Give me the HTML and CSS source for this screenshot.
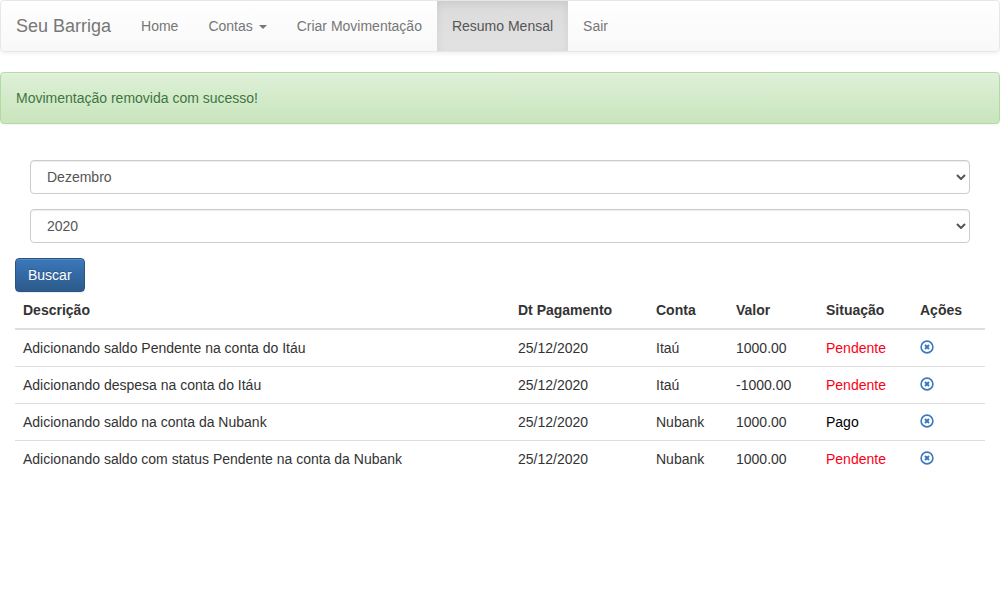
FILE: index.html
```html
<!DOCTYPE html>
<html lang="pt-BR">
<head>
<meta charset="utf-8">
<meta name="viewport" content="width=device-width, initial-scale=1">
<title>Seu Barriga - Resumo Mensal</title>
<link rel="stylesheet" href="styles.css">
</head>
<body>
<svg class="sprite" aria-hidden="true">
  <symbol id="remove" viewBox="0 0 14 14">
    <circle cx="7" cy="7" r="5.9" fill="none" stroke="currentColor" stroke-width="1.6"/>
    <path d="M5 5l4 4M9 5l-4 4" fill="none" stroke="currentColor" stroke-width="2"/>
  </symbol>
</svg>
<nav class="navbar">
  <a class="brand" href="#">Seu Barriga</a>
  <ul class="nav">
    <li><a href="#">Home</a></li>
    <li><a href="#">Contas <span class="caret"></span></a></li>
    <li><a href="#">Criar Movimentação</a></li>
    <li><a class="active" href="#">Resumo Mensal</a></li>
    <li><a href="#">Sair</a></li>
  </ul>
</nav>
<div class="alert" role="alert">Movimentação removida com sucesso!</div>
<main class="content">
  <form class="search">
    <div class="field">
      <select class="control" aria-label="Mês"><option>Dezembro</option></select>
      <svg class="chevron" viewBox="0 0 10 6" aria-hidden="true"><path d="M1 1l4 4 4-4"/></svg>
    </div>
    <div class="field">
      <select class="control" aria-label="Ano"><option>2020</option></select>
      <svg class="chevron" viewBox="0 0 10 6" aria-hidden="true"><path d="M1 1l4 4 4-4"/></svg>
    </div>
    <button class="btn" type="button">Buscar</button>
  </form>
  <table class="table">
    <colgroup><col class="c-desc"><col class="c-date"><col class="c-account"><col class="c-value"><col class="c-status"><col class="c-actions"></colgroup>
    <thead>
      <tr><th>Descrição</th><th>Dt Pagamento</th><th>Conta</th><th>Valor</th><th>Situação</th><th>Ações</th></tr>
    </thead>
    <tbody>
      <tr><td>Adicionando saldo Pendente na conta do Itáu</td><td>25/12/2020</td><td>Itaú</td><td>1000.00</td><td class="pending">Pendente</td><td><a href="#" aria-label="Remover"><svg class="icon"><use href="#remove"/></svg></a></td></tr>
      <tr><td>Adicionando despesa na conta do Itáu</td><td>25/12/2020</td><td>Itaú</td><td>-1000.00</td><td class="pending">Pendente</td><td><a href="#" aria-label="Remover"><svg class="icon"><use href="#remove"/></svg></a></td></tr>
      <tr><td>Adicionando saldo na conta da Nubank</td><td>25/12/2020</td><td>Nubank</td><td>1000.00</td><td class="paid">Pago</td><td><a href="#" aria-label="Remover"><svg class="icon"><use href="#remove"/></svg></a></td></tr>
      <tr><td>Adicionando saldo com status Pendente na conta da Nubank</td><td>25/12/2020</td><td>Nubank</td><td>1000.00</td><td class="pending">Pendente</td><td><a href="#" aria-label="Remover"><svg class="icon"><use href="#remove"/></svg></a></td></tr>
    </tbody>
  </table>
</main>
</body>
</html>
```
FILE: styles.css
```css
* { box-sizing: border-box; }
body {
  margin: 0;
  font: 14px/20px "Helvetica Neue", Helvetica, "Liberation Sans", Arial, sans-serif;
  color: #333;
  background: #fff;
}
a { color: #3b78bd; text-decoration: none; }
.sprite { display: none; }
.navbar {
  display: flex;
  min-height: 52px;
  margin-bottom: 20px;
  border: 1px solid #e7e7e7;
  border-radius: 4px;
  background: linear-gradient(#fff, #f8f8f8);
  box-shadow: inset 0 1px 0 rgba(255,255,255,.15), 0 1px 5px rgba(0,0,0,.075);
}
.brand { padding: 15px; font-size: 18px; color: #777; }
.nav { display: flex; margin: 0; padding: 0; list-style: none; }
.nav a { display: block; padding: 15px; color: #777; }
.nav .active {
  color: #555;
  background: linear-gradient(#dbdbdb, #e2e2e2);
  box-shadow: inset 0 3px 9px rgba(0,0,0,.075);
}
.caret {
  display: inline-block;
  margin-left: 2px;
  vertical-align: middle;
  border-top: 4px solid;
  border-left: 4px solid transparent;
  border-right: 4px solid transparent;
}
.alert {
  padding: 15px;
  margin-bottom: 20px;
  border: 1px solid #b2dba1;
  border-radius: 4px;
  color: #3c763d;
  background: linear-gradient(#dff0d8, #c8e5bc);
  text-shadow: 0 1px 0 rgba(255,255,255,.2);
  box-shadow: inset 0 1px 0 rgba(255,255,255,.25), 0 1px 2px rgba(0,0,0,.05);
}
.content { padding: 16px 15px; }
.field { position: relative; margin: 0 15px 15px; }
.control {
  display: block;
  width: 100%;
  height: 34px;
  padding: 6px 16px;
  font: inherit;
  color: #555;
  background: #fff;
  border: 1px solid #ccc;
  border-radius: 4px;
  box-shadow: inset 0 1px 1px rgba(0,0,0,.075);
  appearance: none;
}
.chevron {
  position: absolute;
  top: 14px;
  right: 4px;
  width: 10px;
  height: 6px;
  fill: none;
  stroke: #555;
  stroke-width: 2;
  pointer-events: none;
}
.btn {
  display: block;
  padding: 6px 12px;
  font: inherit;
  color: #fff;
  text-shadow: 0 -1px 0 rgba(0,0,0,.2);
  background: linear-gradient(#3b78bb, #2c5a8a);
  border: 1px solid #2a5483;
  border-radius: 4px;
  box-shadow: inset 0 1px 0 rgba(255,255,255,.15), 0 1px 1px rgba(0,0,0,.075);
}
.table { width: 100%; table-layout: fixed; border-collapse: collapse; }
.c-date { width: 138px; }
.c-account { width: 80px; }
.c-value { width: 90px; }
.c-status { width: 94px; }
.c-actions { width: 73px; }
th, td { padding: 8px; text-align: left; vertical-align: top; }
th { border-bottom: 2px solid #ddd; }
td { border-top: 1px solid #ddd; }
.pending { color: #fb0017; }
.paid { color: #000; }
.icon { display: block; width: 14px; height: 14px; margin-top: 2px; }
```
